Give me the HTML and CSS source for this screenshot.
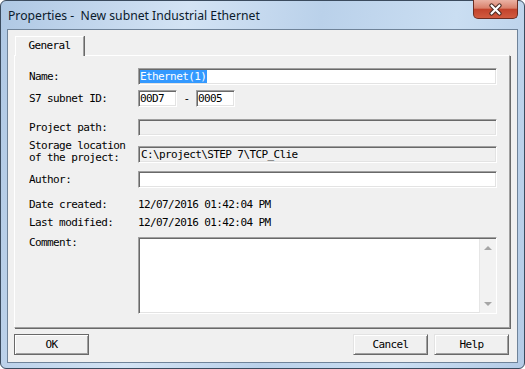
FILE: index.html
```html
<!DOCTYPE html>
<html lang="en">
<head>
    <meta charset="UTF-8">
    <title>Properties - New subnet Industrial Ethernet</title>
    <link rel="stylesheet" href="styles.css">
</head>
<body>
    <div class="window">
        <div class="titlebar">
            <span class="title">Properties -&nbsp; New subnet Industrial Ethernet</span>
            <div class="close">
                <svg width="15" height="13" viewBox="0 0 15 13">
                    <path d="M3.5 2.5 L11.5 10.5 M11.5 2.5 L3.5 10.5" stroke="#4a2a22" stroke-width="4.2" stroke-linecap="round"/>
                    <path d="M3.5 2.5 L11.5 10.5 M11.5 2.5 L3.5 10.5" stroke="#ffffff" stroke-width="2.2" stroke-linecap="round"/>
                </svg>
            </div>
        </div>

        <div class="client">
            <div class="tabs">
                <div class="tab">General</div>
            </div>

            <div class="panel">
                <div class="row">
                    <span class="label">Name:</span>
                    <div class="field"><span class="selected">Ethernet(1)</span></div>
                </div>
                <div class="row r-id">
                    <span class="label">S7 subnet ID:</span>
                    <div class="field small">00D7</div>
                    <span class="dash">-</span>
                    <div class="field small">0005</div>
                </div>
                <div class="row r-path">
                    <span class="label">Project path:</span>
                    <div class="field disabled"></div>
                </div>
                <div class="row r-store">
                    <span class="label two-line">Storage location<br>of the project:</span>
                    <div class="field disabled">C:\project\STEP 7\TCP_Clie</div>
                </div>
                <div class="row r-author">
                    <span class="label">Author:</span>
                    <div class="field"></div>
                </div>
                <div class="row info r-created">
                    <span class="label">Date created:</span>
                    <span class="value">12/07/2016 01:42:04 PM</span>
                </div>
                <div class="row info r-modified">
                    <span class="label">Last modified:</span>
                    <span class="value">12/07/2016 01:42:04 PM</span>
                </div>
                <div class="row r-comment">
                    <span class="label top">Comment:</span>
                    <div class="field memo">
                        <div class="scrollbar">
                            <span class="arrow up"></span>
                            <span class="arrow down"></span>
                        </div>
                    </div>
                </div>
            </div>

            <div class="buttons">
                <button class="btn default">OK</button>
                <span class="spacer"></span>
                <button class="btn">Cancel</button>
                <button class="btn">Help</button>
            </div>
        </div>
    </div>
</body>
</html>
```

FILE: styles.css
```css
body {
    margin: 0;
    background-color: #ffffff;
}

.window {
    width: 525px;
    height: 369px;
    box-sizing: border-box;
    border: 1px solid #3b4b5e;
    border-radius: 6px;
    padding: 0 6px 5px 6px;
    display: flex;
    flex-direction: column;
    background: linear-gradient(100deg, #afc8e4 0%, #d3e3f4 32%, #bad1ea 55%, #cadef2 78%, #b4cbe6 100%);
}

.titlebar {
    height: 28px;
    display: flex;
    align-items: flex-start;
    padding-left: 1px;
}

.title {
    font-family: "Noto Sans", sans-serif;
    font-size: 12.2px;
    line-height: 29px;
    color: #0b1a2c;
    white-space: nowrap;
}

.close {
    margin-left: auto;
    margin-top: -1px;
    width: 45px;
    height: 19px;
    box-sizing: border-box;
    border: 1px solid #6b2d22;
    border-top: none;
    border-radius: 0 0 5px 5px;
    background: linear-gradient(#eab2a4, #d9806b 45%, #c2432c 52%, #d15b40 100%);
    display: flex;
    align-items: center;
    justify-content: center;
}

.client {
    flex: 1;
    border: 1px solid #6f8399;
    background-color: #f0f0f0;
    display: flex;
    flex-direction: column;
    font-family: "DejaVu Sans Mono", monospace;
    font-size: 11px;
    letter-spacing: -0.6px;
    color: #000;
}

.tabs {
    display: flex;
    padding: 6px 0 0 7px;
}

.tab {
    width: 69px;
    height: 20px;
    box-sizing: border-box;
    border-top: 1px solid #ffffff;
    border-left: 1px solid #ffffff;
    border-right: 1px solid #a0a0a0;
    box-shadow: 1px 0 0 #696969;
    background-color: #f0f0f0;
    text-align: center;
    line-height: 18px;
    margin-bottom: -1px;
    position: relative;
    z-index: 1;
}

.panel {
    margin: 0 7px 0 6px;
    height: 273px;
    box-sizing: border-box;
    border: 1px solid;
    border-color: #ffffff #a0a0a0 #a0a0a0 #ffffff;
    box-shadow: 1px 1px 0 #696969;
    padding: 12px 12px 0 14px;
}

.row {
    display: flex;
    align-items: center;
    height: 17px;
}

.r-id { margin-top: 5px; }
.r-path { margin-top: 12px; }
.r-store { margin-top: 10px; }
.r-author { margin-top: 8px; }
.r-created { margin-top: 8px; }
.r-modified { margin-top: 2px; }
.r-comment { margin-top: 7px; height: 77px; align-items: flex-start; }

.info {
    height: 16px;
}

.label {
    width: 109px;
    flex: none;
    white-space: nowrap;
}

.two-line {
    line-height: 12px;
    margin-bottom: 5px;
}

.top {
    line-height: 12px;
}

.field {
    flex: 1;
    height: 17px;
    box-sizing: border-box;
    background-color: #ffffff;
    border: 1px solid;
    border-color: #a0a0a0 #ffffff #ffffff #a0a0a0;
    box-shadow: inset 1px 1px 0 #696969, inset -1px -1px 0 #e3e3e3;
    padding-left: 1px;
    line-height: 15px;
    white-space: nowrap;
    overflow: hidden;
}

.field.small {
    flex: none;
    width: 39px;
}

.field.disabled {
    background-color: #f0f0f0;
    padding-left: 2px;
}

.dash {
    width: 19px;
    text-align: center;
}

.selected {
    background-color: #3399ff;
    color: #ffffff;
    display: inline-block;
    line-height: 13px;
    padding-right: 1px;
}

.field.memo {
    height: 77px;
    display: flex;
    justify-content: flex-end;
    padding: 1px 0 0 0;
}

.scrollbar {
    width: 17px;
    height: 74px;
    background-color: #f2f2f2;
    border-left: 1px solid #e6e6e6;
    box-sizing: border-box;
    display: flex;
    flex-direction: column;
    align-items: center;
    justify-content: space-between;
    padding: 7px 0 7px 0;
}

.arrow {
    width: 0;
    height: 0;
    border-left: 4px solid transparent;
    border-right: 4px solid transparent;
}

.arrow.up {
    border-bottom: 4px solid #a6a6a6;
}

.arrow.down {
    border-top: 4px solid #a6a6a6;
}

.buttons {
    display: flex;
    gap: 6px;
    margin: 6px 8px 0 6px;
}

.spacer {
    flex: 1;
}

.btn {
    width: 75px;
    height: 21px;
    box-sizing: border-box;
    font-family: "DejaVu Sans Mono", monospace;
    font-size: 11px;
    letter-spacing: -0.6px;
    color: #000;
    background-color: #f0f0f0;
    border: 1px solid;
    border-color: #e3e3e3 #696969 #696969 #e3e3e3;
    box-shadow: inset 1px 1px 0 #ffffff, inset -1px -1px 0 #a0a0a0;
    padding: 0;
}

.btn.default {
    border-color: #696969;
}
```
